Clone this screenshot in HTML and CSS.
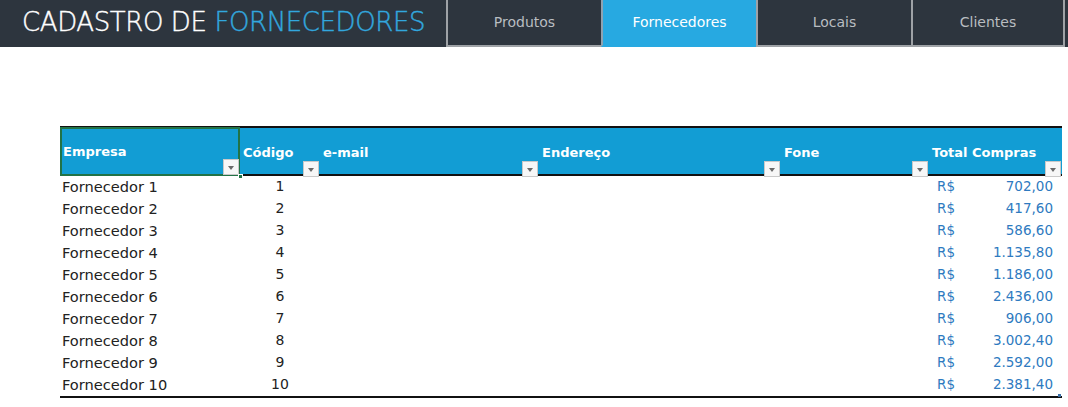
FILE: index.html
```html
<!DOCTYPE html>
<html lang="pt-BR">
<head>
<meta charset="utf-8">
<title>Cadastro de Fornecedores</title>
<link rel="stylesheet" href="styles.css">
</head>
<body>
<header class="topbar">
  <h1 class="title">CADASTRO DE <span class="accent">FORNECEDORES</span></h1>
  <nav class="tabs">
    <a class="tab">Produtos</a>
    <a class="tab active">Fornecedores</a>
    <a class="tab">Locais</a>
    <a class="tab">Clientes</a>
  </nav>
</header>
<main class="sheet">
  <div class="table">
    <div class="row head">
      <div class="cell hcell selected">Empresa<span class="filter"></span><span class="handle"></span></div>
      <div class="cell hcell">Código<span class="filter"></span></div>
      <div class="cell hcell">e-mail<span class="filter"></span></div>
      <div class="cell hcell">Endereço<span class="filter"></span></div>
      <div class="cell hcell">Fone<span class="filter"></span></div>
      <div class="cell hcell">Total Compras<span class="filter"></span></div>
    </div>
    <div class="row"><div class="cell">Fornecedor 1</div><div class="cell num">1</div><div class="cell"></div><div class="cell"></div><div class="cell"></div><div class="cell money"><span>R$</span><span>702,00</span></div></div>
    <div class="row"><div class="cell">Fornecedor 2</div><div class="cell num">2</div><div class="cell"></div><div class="cell"></div><div class="cell"></div><div class="cell money"><span>R$</span><span>417,60</span></div></div>
    <div class="row"><div class="cell">Fornecedor 3</div><div class="cell num">3</div><div class="cell"></div><div class="cell"></div><div class="cell"></div><div class="cell money"><span>R$</span><span>586,60</span></div></div>
    <div class="row"><div class="cell">Fornecedor 4</div><div class="cell num">4</div><div class="cell"></div><div class="cell"></div><div class="cell"></div><div class="cell money"><span>R$</span><span>1.135,80</span></div></div>
    <div class="row"><div class="cell">Fornecedor 5</div><div class="cell num">5</div><div class="cell"></div><div class="cell"></div><div class="cell"></div><div class="cell money"><span>R$</span><span>1.186,00</span></div></div>
    <div class="row"><div class="cell">Fornecedor 6</div><div class="cell num">6</div><div class="cell"></div><div class="cell"></div><div class="cell"></div><div class="cell money"><span>R$</span><span>2.436,00</span></div></div>
    <div class="row"><div class="cell">Fornecedor 7</div><div class="cell num">7</div><div class="cell"></div><div class="cell"></div><div class="cell"></div><div class="cell money"><span>R$</span><span>906,00</span></div></div>
    <div class="row"><div class="cell">Fornecedor 8</div><div class="cell num">8</div><div class="cell"></div><div class="cell"></div><div class="cell"></div><div class="cell money"><span>R$</span><span>3.002,40</span></div></div>
    <div class="row"><div class="cell">Fornecedor 9</div><div class="cell num">9</div><div class="cell"></div><div class="cell"></div><div class="cell"></div><div class="cell money"><span>R$</span><span>2.592,00</span></div></div>
    <div class="row last"><div class="cell">Fornecedor 10</div><div class="cell num">10</div><div class="cell"></div><div class="cell"></div><div class="cell"></div><div class="cell money"><span>R$</span><span>2.381,40</span></div><span class="corner"></span></div>
  </div>
</main>
</body>
</html>
```
FILE: styles.css
```css
* { box-sizing: border-box; }
html, body { margin: 0; padding: 0; background: #ffffff; }
body {
  width: 1068px;
  height: 407px;
  overflow: hidden;
  font-family: "DejaVu Sans", "Liberation Sans", sans-serif;
}

.topbar {
  display: flex;
  height: 47px;
  background: #2d353e;
}
.title {
  margin: 0;
  width: 446px;
  padding-left: 22px;
  font-weight: 200;
  font-size: 26px;
  line-height: 45px;
  color: #ffffff;
  letter-spacing: -0.4px;
  white-space: nowrap;
  -webkit-text-stroke: 0.4px currentColor;
}
.title .accent { color: #32a7de; }

.tabs {
  display: flex;
  flex: 1;
}
.tab {
  width: 155px;
  height: 47px;
  border-left: 2px solid #9ea2a6;
  border-bottom: 2px solid #9ea2a6;
  color: #b9bdc1;
  font-size: 14px;
  display: flex;
  align-items: center;
  justify-content: center;
  padding-bottom: 1px;
}
.tab:last-child { width: 154px; border-right: 2px solid #9ea2a6; }
.tab.active {
  background: #27a9e1;
  color: #ffffff;
  border-left-color: #8fa2b0;
  border-bottom-color: #27a9e1;
}

.sheet {
  padding: 79px 0 0 60px;
}
.table { width: 1002px; position: relative; }
.row {
  display: grid;
  grid-template-columns: 180px 80px 219px 242px 148px 133px;
  height: 22px;
}
.row.head {
  height: 50px;
  background: #129dd4;
  border-top: 2px solid #111111;
  border-bottom: 2px solid #111111;
}
.row.last { border-bottom: 2px solid #111111; height: 24px; }
.cell {
  position: relative;
  font-size: 14.6px;
  color: #222222;
  line-height: 21px;
  padding-left: 2px;
  white-space: nowrap;
}
.hcell {
  color: #ffffff;
  font-weight: bold;
  font-size: 13px;
  line-height: 50px;
  padding-left: 3px;
}
.hcell.selected {
  margin-top: -1px;
  outline: 2px solid #217346;
  outline-offset: -2px;
  height: 49px;
}
.filter {
  position: absolute;
  right: 1px;
  bottom: 1px;
  width: 16px;
  height: 16px;
  background: #f7f7f7;
  border: 1px solid #c9c9c9;
}
.filter::after {
  content: "";
  position: absolute;
  left: 4px;
  top: 6px;
  border-left: 3px solid transparent;
  border-right: 3px solid transparent;
  border-top: 4px solid #6a6a6a;
}
.handle {
  position: absolute;
  right: -3px;
  bottom: -3px;
  width: 5px;
  height: 5px;
  background: #217346;
  border: 1px solid #ffffff;
}
.num { text-align: center; padding-left: 0; font-size: 14px; }
.money {
  display: flex;
  justify-content: space-between;
  padding-left: 8px;
  padding-right: 9px;
  font-size: 13.5px;
  color: #2e7ac0;
}
.corner {
  position: absolute;
  right: 1px;
  bottom: 1px;
  width: 3px;
  height: 3px;
  background: #3a6ea5;
}
```
